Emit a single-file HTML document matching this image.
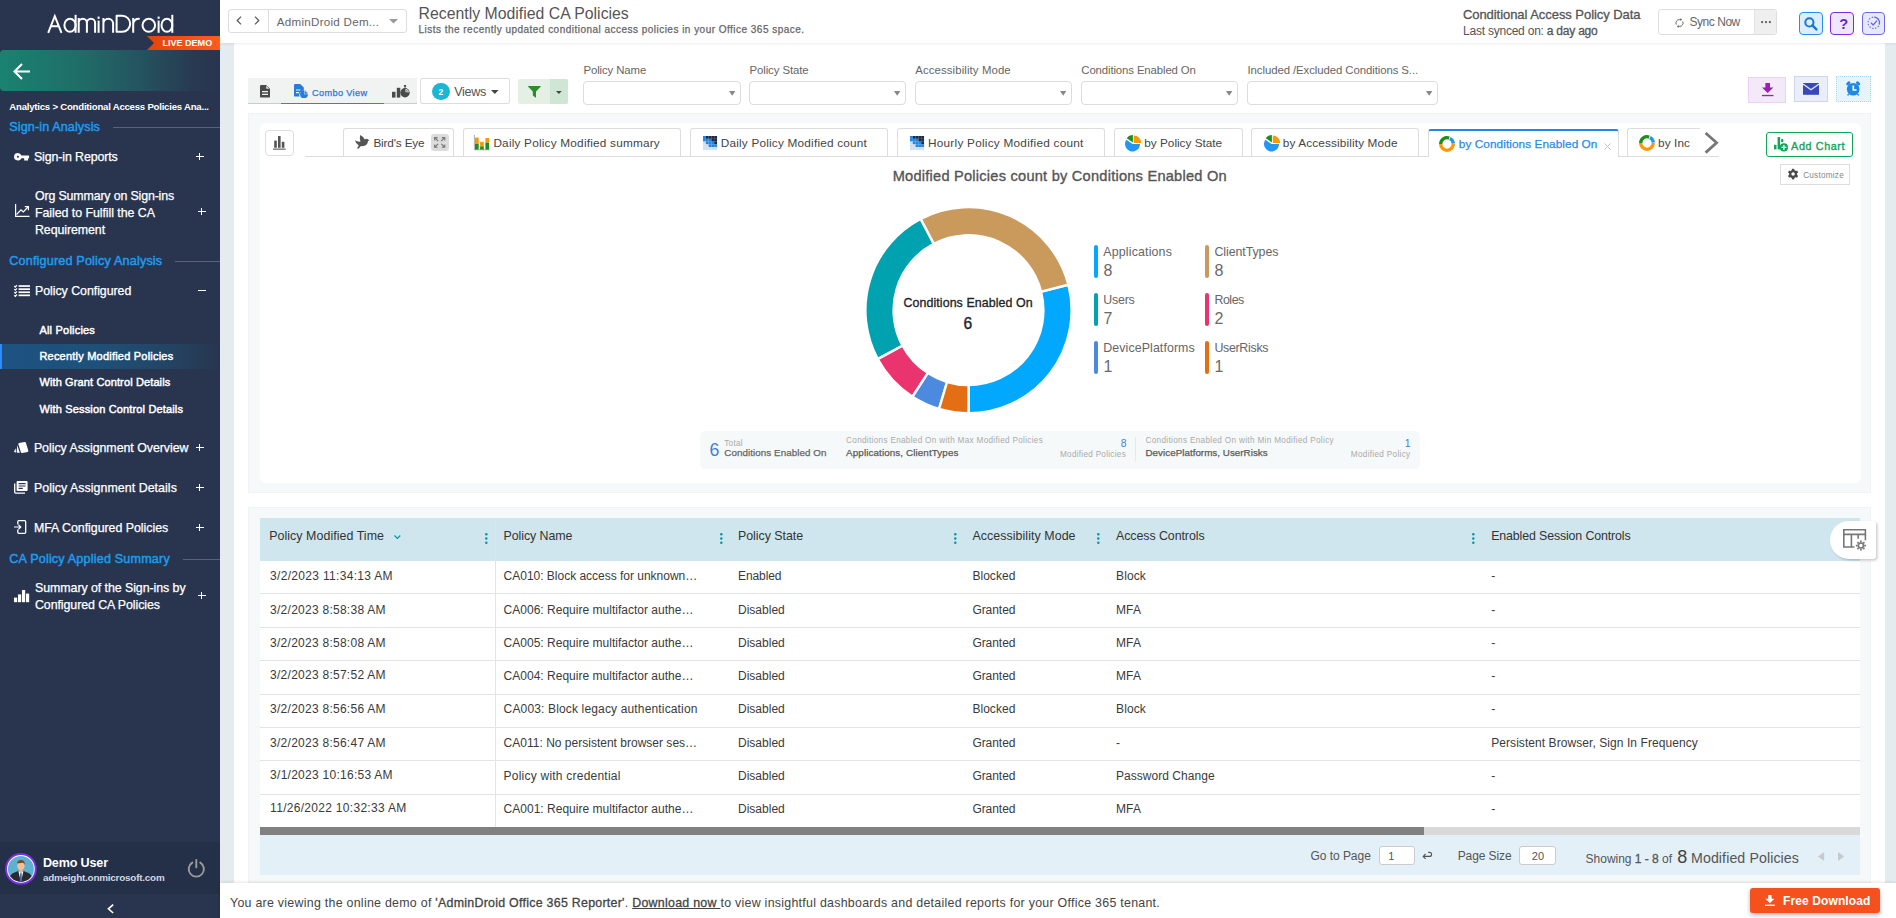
<!DOCTYPE html>
<html><head><meta charset="utf-8"><title>AdminDroid</title><style>
html,body{margin:0;padding:0}
body{width:1896px;height:918px;position:relative;overflow:hidden;background:#fff;font-family:"Liberation Sans", sans-serif;}
div{box-sizing:border-box}
.t{position:absolute;white-space:nowrap;line-height:1;}
svg{position:absolute;overflow:visible}
</style></head><body>
<div style="position:absolute;left:220px;top:43px;width:14px;height:875px;background:#e4ecf0"></div>
<div style="position:absolute;left:1885px;top:43px;width:11px;height:875px;background:#e4ecf0"></div>
<div style="position:absolute;left:220px;top:0px;width:1676px;height:43px;background:#fff;box-shadow:0 1px 2.5px rgba(40,70,90,.10)"></div>
<div style="position:absolute;left:0px;top:0px;width:220px;height:918px;background:#29354f"></div>
<div style="position:absolute;left:0;top:0;width:220px;height:918px">
<div style="position:absolute;left:0px;top:50px;width:220px;height:41px;background:linear-gradient(90deg,#1a8270 0%,#1f6e68 35%,#245560 62%,#283a52 88%,#29354f 100%);border-radius:4px 0 0 4px"></div>
<svg style="left:13px;top:63px" width="18" height="17" viewBox="0 0 18 17"><path d="M9 1 L1.5 8.5 L9 16 M1.5 8.5 H17" fill="none" stroke="#fff" stroke-width="2.1" stroke-linecap="butt" stroke-linejoin="miter"/></svg>
<svg style="left:147px;top:36px" width="73" height="14" viewBox="0 0 73 14"><defs><linearGradient id="lg1" x1="0" x2="1"><stop offset="0" stop-color="#e5430d"/><stop offset="1" stop-color="#ff5c1d"/></linearGradient></defs><path d="M0 0 H73 V14 H0 L7 7 Z" fill="url(#lg1)"/></svg>
<svg style="left:0;top:0" width="220" height="50" viewBox="0 0 220 50"><g fill="none" stroke="#fff" stroke-width="2" stroke-linecap="butt" stroke-linejoin="round">
<path d="M48.2 32.8 L54.8 16.2 L61.5 32.8 M50.9 26.2 H58.7" stroke-linejoin="miter"/>
<ellipse cx="70" cy="25.3" rx="5.6" ry="6.5"/><path d="M75.6 14.8 V32.8"/>
<path d="M78.7 32.8 V17.9 M78.7 23 a4.1 4.3 0 0 1 8.2 0 V32.8 M86.9 23 a4.1 4.3 0 0 1 8.2 0 V32.8"/>
<path d="M98.6 20.6 V32.8"/>
<path d="M103.4 32.8 V17.9 M103.4 23.6 a4.85 4.9 0 0 1 9.7 0 V32.8"/>
<path d="M116.6 15.8 V31.8 H122.2 a8 8 0 0 0 0 -16 Z"/>
<path d="M133.2 32.8 V17.9 M133.2 24 a5.3 5.3 0 0 1 6.5 -5.1"/>
<ellipse cx="148.8" cy="25.3" rx="6.3" ry="6.5"/>
<path d="M158.6 20.6 V32.8"/>
<ellipse cx="166.9" cy="25.3" rx="5.4" ry="6.5"/><path d="M172.3 14.8 V32.8"/>
</g><g fill="#fff"><rect x="97.6" y="16.6" width="2" height="2.2"/><rect x="157.6" y="16.6" width="2" height="2.2"/></g></svg>
<div style="position:absolute;left:113px;top:127px;width:107px;height:1px;background:#59627a"></div>
<div style="position:absolute;left:175px;top:261px;width:45px;height:1px;background:#59627a"></div>
<div style="position:absolute;left:183px;top:559px;width:37px;height:1px;background:#59627a"></div>
<div style="position:absolute;left:0px;top:343.5px;width:220px;height:25px;background:linear-gradient(90deg,#1d5382 0%,#1e5079 45%,#234565 75%,#29354f 100%)"></div>
<div style="position:absolute;left:0px;top:343.5px;width:2px;height:25px;background:#2a8bff"></div>
<div style="position:absolute;left:196px;top:156px;width:8px;height:1px;background:#fff"></div>
<div style="position:absolute;left:199.3px;top:153px;width:1.2px;height:7px;background:#fff"></div>
<div style="position:absolute;left:198px;top:211px;width:8px;height:1px;background:#fff"></div>
<div style="position:absolute;left:200.9px;top:208px;width:1.2px;height:7px;background:#fff"></div>
<div style="position:absolute;left:196px;top:447px;width:8px;height:1px;background:#fff"></div>
<div style="position:absolute;left:199.3px;top:444px;width:1.2px;height:7px;background:#fff"></div>
<div style="position:absolute;left:196px;top:487px;width:8px;height:1px;background:#fff"></div>
<div style="position:absolute;left:199.3px;top:484px;width:1.2px;height:7px;background:#fff"></div>
<div style="position:absolute;left:196px;top:527px;width:8px;height:1px;background:#fff"></div>
<div style="position:absolute;left:199.3px;top:524px;width:1.2px;height:7px;background:#fff"></div>
<div style="position:absolute;left:198px;top:595px;width:8px;height:1px;background:#fff"></div>
<div style="position:absolute;left:200.9px;top:592px;width:1.2px;height:7px;background:#fff"></div>
<div style="position:absolute;left:198px;top:290px;width:7.5px;height:1px;background:#fff"></div>
<svg style="left:13.9px;top:152.6px" width="15.2" height="7.5" viewBox="0 0 15.2 7.5"><path fill="#fff" fill-rule="evenodd" d="M3.85 0 a3.85 3.75 0 1 0 3.6 5.2 H10.2 V7.4 H14.1 V5.2 H15.1 V2.5 H7.45 A3.85 3.75 0 0 0 3.85 0 Z M3.9 2.7 a1.05 1.05 0 1 1 0 2.1 a1.05 1.05 0 0 1 0 -2.1 Z"/></svg>
<svg style="left:14.8px;top:204px" width="15" height="13" viewBox="0 0 15 13"><path d="M0.6 0 V12.4 H14.5" fill="none" stroke="#fff" stroke-width="1.2"/><path d="M1.5 10.5 L6 5.8 L8.3 8 L13 3" fill="none" stroke="#fff" stroke-width="1.2"/><path d="M9.8 2.6 H13.4 V6.2" fill="none" stroke="#fff" stroke-width="1.2"/></svg>
<svg style="left:13.9px;top:285px" width="16" height="11.5" viewBox="0 0 16 11.5"><g fill="#fff"><rect x="4.6" y="0.2" width="11.4" height="1.7"/><rect x="4.6" y="3.3" width="11.4" height="1.7"/><rect x="4.6" y="6.4" width="11.4" height="1.7"/><rect x="4.6" y="9.5" width="11.4" height="1.7"/></g><path d="M0.3 1 l1 1 l1.6 -1.8 M0.3 4.1 l1 1 l1.6 -1.8 M0.3 7.2 l1 1 l1.6 -1.8 M0.3 10.3 l1 1 l1.6 -1.8" fill="none" stroke="#fff" stroke-width="1.25"/></svg>
<svg style="left:13.9px;top:442px" width="14.5" height="11" viewBox="0 0 14.5 11"><path fill="#fff" d="M5 1 L10.6 0 Q11.6 -.1 11.9 .8 L14.3 8.6 Q14.5 9.6 13.6 9.9 L8.2 11 Q7.2 11.1 6.9 10.2 L4.4 2.3 Q4.2 1.3 5 1 Z"/><path fill="#fff" d="M3.2 3.2 L5.8 10.8 L3.5 10.8 Q2.6 10.7 2.7 9.8 Z"/><path fill="#fff" d="M1.6 6.3 L2 10.6 L0.6 10.3 Q0 10 .2 9.3 Z"/></svg>
<svg style="left:13.9px;top:481.2px" width="13.6" height="12.8" viewBox="0 0 13.6 12.8"><path fill="#fff" fill-rule="evenodd" d="M3.6 0 H12.6 Q13.6 0 13.6 1 V9 Q13.6 10 12.6 10 H3.6 Q2.6 10 2.6 9 V1 Q2.6 0 3.6 0 Z M4.6 2 V3.2 H11.6 V2 Z M4.6 4.4 V5.6 H11.6 V4.4 Z M4.6 6.8 V8 H8.8 V6.8 Z"/><path fill="none" stroke="#fff" stroke-width="1.3" d="M0.7 2.6 V11.1 Q0.7 12.1 1.7 12.1 H11"/></svg>
<svg style="left:13.9px;top:520.1px" width="12.4" height="14" viewBox="0 0 12.4 14"><path fill="none" stroke="#fff" stroke-width="1.3" d="M3.8 4.4 V1.7 Q3.8 .7 4.8 .7 H10.7 Q11.7 .7 11.7 1.7 V12.3 Q11.7 13.3 10.7 13.3 H4.8 Q3.8 13.3 3.8 12.3 V9.6"/><path fill="none" stroke="#fff" stroke-width="1.2" d="M0 7 H6.6 M4.4 4.6 L6.8 7 L4.4 9.4"/></svg>
<svg style="left:13.9px;top:589.6px" width="15.2" height="12.2" viewBox="0 0 15.2 12.2"><g fill="#fff"><rect x="0" y="7.6" width="3.2" height="4.6"/><rect x="4" y="4.4" width="3.2" height="7.8"/><rect x="8" y="0" width="3.2" height="12.2"/><rect x="12" y="3.6" width="3.2" height="8.6"/></g></svg>
<div style="position:absolute;left:0px;top:842px;width:220px;height:52px;background:#242f48"></div>
<svg style="left:5.2px;top:853px" width="31.8" height="31.8" viewBox="0 0 31.8 31.8"><defs><clipPath id="av"><circle cx="15.9" cy="15.9" r="13"/></clipPath></defs>
<circle cx="15.9" cy="15.9" r="14.9" fill="#fff" stroke="#7a2fe3" stroke-width="2"/><circle cx="15.9" cy="15.9" r="13" fill="#5fb1d2"/>
<g clip-path="url(#av)"><path d="M3.6 30 Q4 20.6 9.6 19.4 L13.2 18 H18.6 L22.2 19.4 Q27.8 20.6 28.2 30 Z" fill="#2b2b2e"/><path d="M13.4 18.2 L15.9 29 L18.4 18.2 Z" fill="#fff"/><path d="M15.2 19.6 H16.6 L17 27.5 L15.9 29 L14.8 27.5 Z" fill="#4a68b4"/>
<rect x="14.2" y="15" width="3.4" height="3.6" fill="#e8b48a"/><ellipse cx="15.9" cy="12.4" rx="3.7" ry="4.4" fill="#f3c08f"/><path d="M12 12 Q11.7 7 15.9 7 Q20.1 7 19.8 12 Q19.3 10 17.6 9.8 Q15 10.6 12.7 10.1 Q12.2 11 12 12 Z" fill="#7a4a25"/></g></svg>
<svg style="left:187.4px;top:858.8px" width="18.6" height="17.6" viewBox="0 0 18.6 17.6"><path d="M5.3 3.6 A7.6 7.6 0 1 0 13.3 3.6" fill="none" stroke="#9b9b9b" stroke-width="1.9" stroke-linecap="round"/><path d="M9.3 1 V8.4" stroke="#9b9b9b" stroke-width="1.9" stroke-linecap="round"/></svg>
<svg style="left:106.7px;top:904.2px" width="7" height="9.6" viewBox="0 0 7 9.6"><path d="M6.2 .6 L1.4 4.8 L6.2 9" fill="none" stroke="#fff" stroke-width="1.6"/></svg>
</div>
<div style="position:absolute;left:228.2px;top:9.2px;width:178.8px;height:23.6px;border:1px solid #ddd;border-radius:3px;background:#fff"></div>
<div style="position:absolute;left:267.5px;top:10px;width:1px;height:23px;background:#ddd"></div>
<svg style="left:235.5px;top:15.5px" width="6" height="9" viewBox="0 0 6 9"><path d="M5 .7 L1.2 4.5 L5 8.3" fill="none" stroke="#555" stroke-width="1.2"/></svg>
<svg style="left:254px;top:15.5px" width="6" height="9" viewBox="0 0 6 9"><path d="M1 .7 L4.8 4.5 L1 8.3" fill="none" stroke="#555" stroke-width="1.2"/></svg>
<svg style="left:388.5px;top:19px" width="9" height="5" viewBox="0 0 9 5"><path d="M0 0 H9 L4.5 4.6 Z" fill="#999"/></svg>
<div style="position:absolute;left:1658.2px;top:9.4px;width:118.8px;height:25.4px;border:1px solid #ddd;border-radius:3px;background:#fff"></div>
<div style="position:absolute;left:1753.5px;top:10.4px;width:22.5px;height:23.4px;background:#efefef;border-left:1px solid #e2e2e2;border-radius:0 3px 3px 0"></div>
<svg style="left:1674.6px;top:17.6px" width="9" height="10" viewBox="0 0 9 10"><g fill="none" stroke="#666" stroke-width="1"><path d="M1.3 6.6 A3.4 3.4 0 0 1 4.5 1.6 H6.2"/><path d="M7.7 3.4 A3.4 3.4 0 0 1 4.5 8.4 H2.8"/></g><path d="M5.4 0 L7 1.6 L5.4 3.2 Z M3.6 6.8 L2 8.4 L3.6 10 Z" fill="#666"/></svg>
<svg style="left:1760.5px;top:20.6px" width="10" height="2.2" viewBox="0 0 10 2.2"><g fill="#555"><circle cx="1.1" cy="1.1" r="1.1"/><circle cx="5" cy="1.1" r="1.1"/><circle cx="8.9" cy="1.1" r="1.1"/></g></svg>
<div style="position:absolute;left:1799px;top:12.2px;width:24.2px;height:22.6px;border:1.5px solid #2a8de8;border-radius:4px;background:#dbeefb"></div>
<svg style="left:1804.4px;top:16.6px" width="13.5" height="13.5" viewBox="0 0 13.5 13.5"><circle cx="5.4" cy="5.4" r="4.1" fill="none" stroke="#1976d2" stroke-width="2"/><path d="M8.4 8.4 L12.4 12.4" stroke="#1976d2" stroke-width="2.4" stroke-linecap="round"/></svg>
<div style="position:absolute;left:1830px;top:12.2px;width:24px;height:22.6px;border:1.5px solid #7a2be0;border-radius:4px;background:#efe6fb"></div>
<div style="position:absolute;left:1862.1px;top:12.2px;width:22.6px;height:22.6px;border:1.5px solid #6f68e6;border-radius:4px;background:#e6e8fb"></div>
<svg style="left:1866.6px;top:16.4px" width="13.6" height="13.6" viewBox="0 0 13.6 13.6"><path d="M7.4 1.1 A5.7 5.7 0 0 1 12.3 8.6" fill="none" stroke="#6563e6" stroke-width="1.1"/><circle cx="6.8" cy="6.8" r="5.7" fill="none" stroke="#6563e6" stroke-width="1.1" stroke-dasharray="1.4 1.6"/><path d="M4 6.8 L6.2 9 L10 4.6" fill="none" stroke="#6563e6" stroke-width="1.2"/></svg>
<div style="position:absolute;left:248px;top:78px;width:169px;height:25.7px;background:#f1f2f2;border-bottom:1px solid #ccc"></div>
<div style="position:absolute;left:280.8px;top:102.6px;width:103.2px;height:1.6px;background:#2186e8"></div>
<svg style="left:260px;top:85.3px" width="10" height="12.6" viewBox="0 0 10 12.6"><path fill="#4a4a4a" fill-rule="evenodd" d="M1.2 0 H6.2 L10 3.8 V11.4 Q10 12.6 8.8 12.6 H1.2 Q0 12.6 0 11.4 V1.2 Q0 0 1.2 0 Z M2 5.9 V7.2 H8 V5.9 Z M2 8.7 V10 H8 V8.7 Z"/><path d="M6.2 .6 V3.8 H9.4 Z" fill="#d6dde2"/></svg>
<svg style="left:293.7px;top:84.3px" width="14" height="14.2" viewBox="0 0 14 14.2"><path fill="#2a7bdc" fill-rule="evenodd" d="M1.2 0 H6.2 L9.8 3.6 V6.4 A4.6 4.6 0 0 0 5.6 12.6 H1.2 Q0 12.6 0 11.4 V1.2 Q0 0 1.2 0 Z M2 5.4 V6.6 H6.4 V5.4 Z M2 8 V9.2 H5 V8 Z"/><circle cx="10" cy="10.2" r="3.9" fill="#2a7bdc"/><path d="M10 10.2 V6.3 A3.9 3.9 0 0 1 13.9 10.2 Z" fill="#fff" opacity=".85"/><path d="M10.5 9.7 V6.9 A3.3 3.3 0 0 1 13.3 9.7 Z" fill="#2a7bdc"/></svg>
<svg style="left:392.1px;top:85.2px" width="17.8" height="12.6" viewBox="0 0 17.8 12.6"><g fill="#4a4a4a"><rect x="0" y="6.8" width="3.5" height="5.8"/><rect x="4.8" y="2.8" width="3.5" height="9.8"/><circle cx="13" cy="7.8" r="4.7"/><rect x="11.9" y="0" width="2.2" height="1.8"/><rect x="12.5" y="1.5" width="1" height="2"/></g><path d="M13.5 7.3 V3.9 A3.5 3.5 0 0 1 16.9 7.3 Z" fill="#f1f2f2"/><path d="M14.3 6.5 V5 A1.8 1.8 0 0 1 15.8 6.5 Z" fill="#4a4a4a"/></svg>
<div style="position:absolute;left:420.4px;top:78.4px;width:89.2px;height:25.3px;border:1px solid #ddd;border-radius:2px;background:#fff"></div>
<div style="position:absolute;left:431.9px;top:82.6px;width:17.8px;height:17.2px;border-radius:50%;background:#1bb5d6"></div>
<svg style="left:491px;top:90.4px" width="7.6" height="4" viewBox="0 0 7.6 4"><path d="M0 0 H7.6 L3.8 4 Z" fill="#444"/></svg>
<div style="position:absolute;left:518px;top:79px;width:50px;height:24.7px;background:#e4f0e4;border-radius:2px"></div>
<div style="position:absolute;left:550.4px;top:79px;width:17.6px;height:24.7px;background:#d0e6d5;border-radius:0 2px 2px 0"></div>
<svg style="left:528.2px;top:86.2px" width="12.8" height="11.6" viewBox="0 0 12.8 11.6"><path d="M.3 0 H12.5 Q13 .3 12.6 .8 L8 5.6 V11.2 Q7.8 11.7 7.3 11.4 L5 9.6 Q4.8 9.4 4.8 9.1 V5.6 L.2 .8 Q-.2 .3 .3 0 Z" fill="#2c8c2c"/></svg>
<svg style="left:556.1px;top:91.3px" width="5.8" height="3" viewBox="0 0 5.8 3"><path d="M0 0 H5.8 L2.9 3 Z" fill="#444"/></svg>
<div style="position:absolute;left:583.2px;top:81.2px;width:157.4px;height:23.8px;border:1px solid #dcdcdc;border-radius:4px;background:#fff"></div>
<svg style="left:729.0px;top:90.5px" width="6.4" height="4.8" viewBox="0 0 6.4 4.8"><path d="M0 0 H6.4 L3.2 4.8 Z" fill="#888"/></svg>
<div style="position:absolute;left:749.2px;top:81.2px;width:156.6px;height:23.8px;border:1px solid #dcdcdc;border-radius:4px;background:#fff"></div>
<svg style="left:894.2px;top:90.5px" width="6.4" height="4.8" viewBox="0 0 6.4 4.8"><path d="M0 0 H6.4 L3.2 4.8 Z" fill="#888"/></svg>
<div style="position:absolute;left:915px;top:81.2px;width:156.6px;height:23.8px;border:1px solid #dcdcdc;border-radius:4px;background:#fff"></div>
<svg style="left:1060.0px;top:90.5px" width="6.4" height="4.8" viewBox="0 0 6.4 4.8"><path d="M0 0 H6.4 L3.2 4.8 Z" fill="#888"/></svg>
<div style="position:absolute;left:1081px;top:81.2px;width:156.5px;height:23.8px;border:1px solid #dcdcdc;border-radius:4px;background:#fff"></div>
<svg style="left:1225.9px;top:90.5px" width="6.4" height="4.8" viewBox="0 0 6.4 4.8"><path d="M0 0 H6.4 L3.2 4.8 Z" fill="#888"/></svg>
<div style="position:absolute;left:1247.2px;top:81.2px;width:190.4px;height:23.8px;border:1px solid #dcdcdc;border-radius:4px;background:#fff"></div>
<svg style="left:1426.0000000000002px;top:90.5px" width="6.4" height="4.8" viewBox="0 0 6.4 4.8"><path d="M0 0 H6.4 L3.2 4.8 Z" fill="#888"/></svg>
<div style="position:absolute;left:1748.1px;top:77.2px;width:37.7px;height:25.4px;background:#f2e9f9;border:1px solid #efd0f1"></div>
<svg style="left:1761.8px;top:83.1px" width="11.4" height="13.2" viewBox="0 0 11.4 13.2"><path d="M3.4 0 H8 V4.6 H11.4 L5.7 9.9 L0 4.6 H3.4 Z" fill="#9c1fb0"/><rect x="0" y="11.9" width="11.4" height="1.3" fill="#9c1fb0"/></svg>
<div style="position:absolute;left:1794.3px;top:76.1px;width:33.6px;height:25.7px;background:#eaeef8;border:1.5px solid #d0d5ef"></div>
<svg style="left:1803px;top:83.3px" width="16" height="11.8" viewBox="0 0 16 11.8"><rect width="16" height="11.8" fill="#3848ba"/><path d="M0 .9 L8 6.8 L16 .9" fill="none" stroke="#eaeef8" stroke-width="1.3"/></svg>
<div style="position:absolute;left:1836px;top:76.1px;width:34.9px;height:25.7px;background:#e6f4fb;border:1px dotted #a9daee"></div>
<svg style="left:1846.4px;top:81.4px" width="14.4" height="14.8" viewBox="0 0 14.4 14.8"><g fill="#1e88e5"><circle cx="7.2" cy="8.2" r="6.3"/><ellipse cx="2.3" cy="2.3" rx="2.5" ry="1.5" transform="rotate(-42 2.3 2.3)"/><ellipse cx="12.1" cy="2.3" rx="2.5" ry="1.5" transform="rotate(42 12.1 2.3)"/><path d="M2.4 12.6 L3.6 13.6 L2 14.8 L1 13.9 Z M12 12.6 L10.8 13.6 L12.4 14.8 L13.4 13.9 Z"/></g><path d="M7.3 4.4 V9 H10.6" fill="none" stroke="#fff" stroke-width="1.7"/></svg>
<div style="position:absolute;left:248.3px;top:113px;width:1622.4px;height:379.8px;background:#f6f9f9;border:1px solid #f0f3f3"></div>
<div style="position:absolute;left:259.5px;top:122.5px;width:1601.5px;height:360px;background:#fff;border-radius:6px"></div>
<div style="position:absolute;left:265.4px;top:129.5px;width:28.5px;height:26.1px;border:1px solid #ddd;border-radius:4px;background:#fff"></div>
<svg style="left:273.3px;top:135.7px" width="12.7" height="13.7" viewBox="0 0 12.7 13.7"><g fill="#555"><rect x="1.2" y="4.6" width="2.6" height="7.2"/><rect x="5" y="0" width="2.6" height="11.8"/><rect x="8.8" y="5.8" width="2.6" height="6"/><rect x="0" y="12.6" width="12.7" height="1.1"/></g></svg>
<div style="position:absolute;left:305px;top:155.8px;width:1414px;height:1px;background:#ddd"></div>
<div style="position:absolute;left:342.6px;top:128.4px;width:111.0px;height:27.9px;border:1px solid #ddd;border-bottom:none;border-radius:3px 3px 0 0;background:#fff"></div>
<svg style="left:355px;top:135.1px" width="14.6" height="13.9" viewBox="0 0 14.6 13.9"><path fill="#555" d="M0 5.2 Q2.6 7 5.4 6.6 Q4.2 3.4 5.2 0 Q8.6 1.6 9.8 4.6 Q10.9 3.4 12.3 3.9 L14.5 5.3 L13 6.1 Q12.8 9.6 9.6 10.8 Q7.6 11.4 6 11 L3.4 13.7 L2 13.2 L3.8 10.4 Q.8 8.8 0 5.2 Z"/></svg>
<div style="position:absolute;left:431.1px;top:134.1px;width:17.8px;height:16.6px;background:#dcdcdc;border-radius:3px"></div>
<svg style="left:434.2px;top:137.2px" width="11.4" height="10.8" viewBox="0 0 11.4 10.8"><g fill="none" stroke="#777" stroke-width="1.1"><path d="M0.6 3.4 V.6 H3.6 M.8 .8 L4.2 4"/><path d="M10.8 3.4 V.6 H7.8 M10.6 .8 L7.2 4"/><path d="M0.6 7.4 V10.2 H3.6 M.8 10 L4.2 6.8"/><path d="M10.8 7.4 V10.2 H7.8 M10.6 10 L7.2 6.8"/></g></svg>
<div style="position:absolute;left:462.5px;top:128.4px;width:218.79999999999995px;height:27.9px;border:1px solid #ddd;border-bottom:none;border-radius:3px 3px 0 0;background:#fff"></div>
<svg style="left:474.2px;top:135.1px" width="15.6" height="15.2" viewBox="0 0 15.6 15.2"><path d="M.4 0 V14.8 H15.6" fill="none" stroke="#999" stroke-width=".8"/><rect x="1" y="2.6" width="3.7" height="6.2" fill="#ff9800"/><rect x="1" y="8.8" width="3.7" height="5.8" fill="#1e8e1e"/><rect x="6.1" y="6.8" width="3.7" height="4.6" fill="#ff9800"/><rect x="6.1" y="11.4" width="3.7" height="3.2" fill="#1e8e1e"/><rect x="11.4" y="3" width="3.7" height="4.6" fill="#ff9800"/><rect x="11.4" y="7.6" width="3.7" height="7" fill="#1e8e1e"/></svg>
<div style="position:absolute;left:689.5px;top:128.4px;width:198.79999999999995px;height:27.9px;border:1px solid #ddd;border-bottom:none;border-radius:3px 3px 0 0;background:#fff"></div>
<svg style="left:702.9px;top:135.9px" width="14" height="14" viewBox="0 0 14 14"><rect x="0.0" y="0.0" width="2.85" height="2.85" fill="#1e88e5"/><rect x="2.8" y="0.0" width="2.85" height="2.85" fill="#1b2b45"/><rect x="5.6" y="0.0" width="2.85" height="2.85" fill="#1b2b45"/><rect x="8.4" y="0.0" width="2.85" height="2.85" fill="#1b2b45"/><rect x="11.2" y="0.0" width="2.85" height="2.85" fill="#1b2b45"/><rect x="0.0" y="2.8" width="2.85" height="2.85" fill="#1e88e5"/><rect x="2.8" y="2.8" width="2.85" height="2.85" fill="#1e88e5"/><rect x="5.6" y="2.8" width="2.85" height="2.85" fill="#2a7fd6"/><rect x="8.4" y="2.8" width="2.85" height="2.85" fill="#1b2b45"/><rect x="11.2" y="2.8" width="2.85" height="2.85" fill="#1b2b45"/><rect x="0.0" y="5.6" width="2.85" height="2.85" fill="#cfdfee"/><rect x="2.8" y="5.6" width="2.85" height="2.85" fill="#1e88e5"/><rect x="5.6" y="5.6" width="2.85" height="2.85" fill="#1e88e5"/><rect x="8.4" y="5.6" width="2.85" height="2.85" fill="#1e88e5"/><rect x="11.2" y="5.6" width="2.85" height="2.85" fill="#1b2b45"/><rect x="0.0" y="8.4" width="2.85" height="2.85" fill="#cfdfee"/><rect x="2.8" y="8.4" width="2.85" height="2.85" fill="#cfdfee"/><rect x="5.6" y="8.4" width="2.85" height="2.85" fill="#1e88e5"/><rect x="8.4" y="8.4" width="2.85" height="2.85" fill="#1e88e5"/><rect x="11.2" y="8.4" width="2.85" height="2.85" fill="#1e88e5"/><rect x="0.0" y="11.2" width="2.85" height="2.85" fill="#cfdfee"/><rect x="2.8" y="11.2" width="2.85" height="2.85" fill="#cfdfee"/><rect x="5.6" y="11.2" width="2.85" height="2.85" fill="#cfdfee"/><rect x="8.4" y="11.2" width="2.85" height="2.85" fill="#cfdfee"/><rect x="11.2" y="11.2" width="2.85" height="2.85" fill="#cfdfee"/></svg>
<div style="position:absolute;left:896.5px;top:128.4px;width:208.0px;height:27.9px;border:1px solid #ddd;border-bottom:none;border-radius:3px 3px 0 0;background:#fff"></div>
<svg style="left:910.1px;top:135.9px" width="14" height="14" viewBox="0 0 14 14"><rect x="0.0" y="0.0" width="2.85" height="2.85" fill="#1e88e5"/><rect x="2.8" y="0.0" width="2.85" height="2.85" fill="#1b2b45"/><rect x="5.6" y="0.0" width="2.85" height="2.85" fill="#1b2b45"/><rect x="8.4" y="0.0" width="2.85" height="2.85" fill="#1b2b45"/><rect x="11.2" y="0.0" width="2.85" height="2.85" fill="#1b2b45"/><rect x="0.0" y="2.8" width="2.85" height="2.85" fill="#1e88e5"/><rect x="2.8" y="2.8" width="2.85" height="2.85" fill="#1e88e5"/><rect x="5.6" y="2.8" width="2.85" height="2.85" fill="#2a7fd6"/><rect x="8.4" y="2.8" width="2.85" height="2.85" fill="#1b2b45"/><rect x="11.2" y="2.8" width="2.85" height="2.85" fill="#1b2b45"/><rect x="0.0" y="5.6" width="2.85" height="2.85" fill="#cfdfee"/><rect x="2.8" y="5.6" width="2.85" height="2.85" fill="#1e88e5"/><rect x="5.6" y="5.6" width="2.85" height="2.85" fill="#1e88e5"/><rect x="8.4" y="5.6" width="2.85" height="2.85" fill="#1e88e5"/><rect x="11.2" y="5.6" width="2.85" height="2.85" fill="#1b2b45"/><rect x="0.0" y="8.4" width="2.85" height="2.85" fill="#cfdfee"/><rect x="2.8" y="8.4" width="2.85" height="2.85" fill="#cfdfee"/><rect x="5.6" y="8.4" width="2.85" height="2.85" fill="#1e88e5"/><rect x="8.4" y="8.4" width="2.85" height="2.85" fill="#1e88e5"/><rect x="11.2" y="8.4" width="2.85" height="2.85" fill="#1e88e5"/><rect x="0.0" y="11.2" width="2.85" height="2.85" fill="#cfdfee"/><rect x="2.8" y="11.2" width="2.85" height="2.85" fill="#cfdfee"/><rect x="5.6" y="11.2" width="2.85" height="2.85" fill="#cfdfee"/><rect x="8.4" y="11.2" width="2.85" height="2.85" fill="#cfdfee"/><rect x="11.2" y="11.2" width="2.85" height="2.85" fill="#cfdfee"/></svg>
<div style="position:absolute;left:1113.8px;top:128.4px;width:129.60000000000014px;height:27.9px;border:1px solid #ddd;border-bottom:none;border-radius:3px 3px 0 0;background:#fff"></div>
<svg style="left:1125px;top:134.8px" width="16.4" height="16.6" viewBox="0 0 16.4 16.6"><path d="M7.5 9 L15 9 A7.5 7.5 0 1 1 1.4 4.65 Z" fill="#2196f3"/><path d="M8.8 8 V.5 A7.5 7.5 0 0 1 16.3 8 Z" fill="#ff9800"/><path d="M7.9 7.6 L1.8 3.3 A7.5 7.5 0 0 1 7.9 .1 Z" fill="#1e8e1e"/></svg>
<div style="position:absolute;left:1251.3px;top:128.4px;width:167.9000000000001px;height:27.9px;border:1px solid #ddd;border-bottom:none;border-radius:3px 3px 0 0;background:#fff"></div>
<svg style="left:1264px;top:134.8px" width="16.4" height="16.6" viewBox="0 0 16.4 16.6"><path d="M7.5 9 L15 9 A7.5 7.5 0 1 1 1.4 4.65 Z" fill="#2196f3"/><path d="M8.8 8 V.5 A7.5 7.5 0 0 1 16.3 8 Z" fill="#ff9800"/><path d="M7.9 7.6 L1.8 3.3 A7.5 7.5 0 0 1 7.9 .1 Z" fill="#1e8e1e"/></svg>
<div style="position:absolute;left:1427.8px;top:128.6px;width:190.79999999999995px;height:28.4px;border:1px solid #ddd;border-top:2px solid #2186e8;border-bottom:none;border-radius:3px 3px 0 0;background:#fff"></div>
<svg style="left:1439px;top:135.8px" width="16" height="16" viewBox="0 0 16 16"><g fill="none" stroke-width="3.3"><path d="M1.7 8 A6.3 6.3 0 0 0 14.3 8" stroke="#ff9800"/><path d="M1.7 8 A6.3 6.3 0 0 1 10.15 2.08" stroke="#1e8e1e"/><path d="M10.96 2.44 A6.3 6.3 0 0 1 14.29 7.67" stroke="#2196f3"/></g></svg>
<svg style="left:1603.8px;top:142.6px" width="7" height="7" viewBox="0 0 7 7"><path d="M.4 .4 L6.6 6.6 M6.6 .4 L.4 6.6" stroke="#c4c4c4" stroke-width="1"/></svg>
<div style="position:absolute;left:1627.1px;top:128.4px;width:93px;height:27.9px;border:1px solid #ddd;border-bottom:none;border-right:none;border-radius:3px 0 0 0;background:#fff"></div>
<svg style="left:1639px;top:135.2px" width="16" height="16" viewBox="0 0 16 16"><g fill="none" stroke-width="3.3"><path d="M1.7 8 A6.3 6.3 0 0 0 14.3 8" stroke="#ff9800"/><path d="M1.7 8 A6.3 6.3 0 0 1 10.15 2.08" stroke="#1e8e1e"/><path d="M10.96 2.44 A6.3 6.3 0 0 1 14.29 7.67" stroke="#2196f3"/></g></svg>
<div style="position:absolute;left:1676px;top:130px;width:24px;height:25px;background:linear-gradient(90deg,rgba(255,255,255,0),#fff 70%)"></div>
<div style="position:absolute;left:1700px;top:127px;width:20px;height:28.6px;background:#fff"></div>
<svg style="left:1704px;top:131.8px" width="15" height="21.6" viewBox="0 0 15 21.6"><path d="M1.6 1 L12.6 10.8 L1.6 20.6" fill="none" stroke="#777" stroke-width="2.8"/></svg>
<div style="position:absolute;left:1765.9px;top:132.3px;width:87.1px;height:24.5px;border:1.5px solid #12a558;border-radius:3px;background:#fff"></div>
<svg style="left:1774.1px;top:137.4px" width="14" height="14.6" viewBox="0 0 14 14.6"><g fill="#12a558"><rect x="0" y="7.8" width="2.5" height="4.6"/><rect x="3.6" y="0" width="2.5" height="12.4"/><rect x="7.1" y="2.1" width="2.2" height="3"/><circle cx="9.9" cy="10.4" r="4.1"/></g><path d="M9.9 7.9 V12.9 M7.4 10.4 H12.4" stroke="#fff" stroke-width="1.3"/></svg>
<div style="position:absolute;left:1780px;top:164px;width:69.8px;height:20.6px;border:1px solid #ddd;background:#fff"></div>
<svg style="left:1788.1px;top:169.1px" width="10.2" height="10.2" viewBox="0 0 10.2 10.2"><g fill="#4a4a4a"><rect x="3.9" y="-.2" width="2.4" height="2.6" transform="rotate(0 5.1 5.1)"/><rect x="3.9" y="-.2" width="2.4" height="2.6" transform="rotate(60 5.1 5.1)"/><rect x="3.9" y="-.2" width="2.4" height="2.6" transform="rotate(120 5.1 5.1)"/><rect x="3.9" y="-.2" width="2.4" height="2.6" transform="rotate(180 5.1 5.1)"/><rect x="3.9" y="-.2" width="2.4" height="2.6" transform="rotate(240 5.1 5.1)"/><rect x="3.9" y="-.2" width="2.4" height="2.6" transform="rotate(300 5.1 5.1)"/></g><circle cx="5.1" cy="5.1" r="2.9" fill="none" stroke="#4a4a4a" stroke-width="2.3"/></svg>
<svg style="left:0;top:0" width="1896" height="918" viewBox="0 0 1896 918"><path d="M968.50 413.30 A103.1 103.1 0 0 0 1068.41 284.73 L1041.08 291.70 A74.9 74.9 0 0 1 968.50 385.10 Z" fill="#02a8fd" stroke="#fff" stroke-width="2.4" stroke-linejoin="miter"/><path d="M1068.41 284.73 A103.1 103.1 0 0 0 920.57 218.92 L933.68 243.88 A74.9 74.9 0 0 1 1041.08 291.70 Z" fill="#ca9a5d" stroke="#fff" stroke-width="2.4" stroke-linejoin="miter"/><path d="M920.57 218.92 A103.1 103.1 0 0 0 877.72 359.08 L902.55 345.71 A74.9 74.9 0 0 1 933.68 243.88 Z" fill="#01a2af" stroke="#fff" stroke-width="2.4" stroke-linejoin="miter"/><path d="M877.72 359.08 A103.1 103.1 0 0 0 912.50 396.76 L927.82 373.09 A74.9 74.9 0 0 1 902.55 345.71 Z" fill="#e93470" stroke="#fff" stroke-width="2.4" stroke-linejoin="miter"/><path d="M912.50 396.76 A103.1 103.1 0 0 0 939.05 409.00 L947.10 381.98 A74.9 74.9 0 0 1 927.82 373.09 Z" fill="#4c8ae0" stroke="#fff" stroke-width="2.4" stroke-linejoin="miter"/><path d="M939.05 409.00 A103.1 103.1 0 0 0 968.50 413.30 L968.50 385.10 A74.9 74.9 0 0 1 947.10 381.98 Z" fill="#e46e14" stroke="#fff" stroke-width="2.4" stroke-linejoin="miter"/></svg>
<div style="position:absolute;left:1094.1px;top:245.4px;width:4px;height:32.4px;background:#02a8fd;border-radius:2px"></div>
<div style="position:absolute;left:1205.2px;top:245.4px;width:4px;height:32.4px;background:#ca9a5d;border-radius:2px"></div>
<div style="position:absolute;left:1094.1px;top:293.4px;width:4px;height:32.4px;background:#01a2af;border-radius:2px"></div>
<div style="position:absolute;left:1205.2px;top:293.4px;width:4px;height:32.4px;background:#e93470;border-radius:2px"></div>
<div style="position:absolute;left:1094.1px;top:341.3px;width:4px;height:32.4px;background:#4c8ae0;border-radius:2px"></div>
<div style="position:absolute;left:1205.2px;top:341.3px;width:4px;height:32.4px;background:#e46e14;border-radius:2px"></div>
<div style="position:absolute;left:699.8px;top:431px;width:720px;height:37.6px;background:#f6f9f9;border-radius:5px"></div>
<div style="position:absolute;left:1135px;top:437px;width:1px;height:25px;background:#e6e9e9"></div>
<div style="position:absolute;left:248.3px;top:507.4px;width:1622.4px;height:376px;background:#f6f9f9;border:1px solid #f0f3f3"></div>
<div style="position:absolute;left:260px;top:517.7px;width:1600.3px;height:42.9px;background:#cfe6ee"></div>
<svg style="left:393.7px;top:534.6px" width="6.8" height="4.4" viewBox="0 0 6.8 4.4"><path d="M.5 .5 L3.4 3.4 L6.3 .5" fill="none" stroke="#0097a7" stroke-width="1.2"/></svg>
<svg style="left:484.9px;top:533.2px" width="2.6" height="11" viewBox="0 0 2.6 11"><g fill="#0097a7"><circle cx="1.3" cy="1.3" r="1.25"/><circle cx="1.3" cy="5.5" r="1.25"/><circle cx="1.3" cy="9.7" r="1.25"/></g></svg>
<svg style="left:719.6px;top:533.2px" width="2.6" height="11" viewBox="0 0 2.6 11"><g fill="#0097a7"><circle cx="1.3" cy="1.3" r="1.25"/><circle cx="1.3" cy="5.5" r="1.25"/><circle cx="1.3" cy="9.7" r="1.25"/></g></svg>
<svg style="left:953.9000000000001px;top:533.2px" width="2.6" height="11" viewBox="0 0 2.6 11"><g fill="#0097a7"><circle cx="1.3" cy="1.3" r="1.25"/><circle cx="1.3" cy="5.5" r="1.25"/><circle cx="1.3" cy="9.7" r="1.25"/></g></svg>
<svg style="left:1097.2px;top:533.2px" width="2.6" height="11" viewBox="0 0 2.6 11"><g fill="#0097a7"><circle cx="1.3" cy="1.3" r="1.25"/><circle cx="1.3" cy="5.5" r="1.25"/><circle cx="1.3" cy="9.7" r="1.25"/></g></svg>
<svg style="left:1471.9px;top:533.2px" width="2.6" height="11" viewBox="0 0 2.6 11"><g fill="#0097a7"><circle cx="1.3" cy="1.3" r="1.25"/><circle cx="1.3" cy="5.5" r="1.25"/><circle cx="1.3" cy="9.7" r="1.25"/></g></svg>
<div style="position:absolute;left:260px;top:560.6px;width:1600.3px;height:266.88px;background:#fff"></div>
<div style="position:absolute;left:260px;top:593.46px;width:1600.3px;height:1px;background:#e4e4e4"></div>
<div style="position:absolute;left:260px;top:626.82px;width:1600.3px;height:1px;background:#e4e4e4"></div>
<div style="position:absolute;left:260px;top:660.1800000000001px;width:1600.3px;height:1px;background:#e4e4e4"></div>
<div style="position:absolute;left:260px;top:693.54px;width:1600.3px;height:1px;background:#e4e4e4"></div>
<div style="position:absolute;left:260px;top:726.9000000000001px;width:1600.3px;height:1px;background:#e4e4e4"></div>
<div style="position:absolute;left:260px;top:760.26px;width:1600.3px;height:1px;background:#e4e4e4"></div>
<div style="position:absolute;left:260px;top:793.62px;width:1600.3px;height:1px;background:#e4e4e4"></div>
<div style="position:absolute;left:494.5px;top:517.7px;width:1px;height:309.78px;background:#dfe6e8"></div>
<div style="position:absolute;left:1830.2px;top:520.8px;width:45.4px;height:37.8px;background:#fff;border-radius:19px 3px 3px 19px;box-shadow:1.5px 1.5px 2.5px rgba(0,0,0,.2)"></div>
<svg style="left:1843.4px;top:529.2px" width="24" height="22.6" viewBox="0 0 24 22.6"><g fill="none" stroke="#777" stroke-width="1.6"><path d="M11.4 18 H.8 V.8 H22.4 V11.2"/><path d="M.8 5.4 H22.4 M8.4 5.4 V18 M15.2 5.4 V9.8"/></g><g fill="none" stroke="#777"><circle cx="17.9" cy="16.6" r="2.5" stroke-width="1.5"/><path d="M17.9 11.6 V21.6 M12.9 16.6 H22.9 M14.4 13.1 L21.4 20.1 M21.4 13.1 L14.4 20.1" stroke-width="1.7" stroke-dasharray="1.8 6.4"/></g></svg>
<div style="position:absolute;left:260px;top:827.48px;width:1600.3px;height:8px;background:#d9d9d9"></div>
<div style="position:absolute;left:260px;top:827.48px;width:1163.8px;height:8px;background:#808080"></div>
<div style="position:absolute;left:260px;top:835.48px;width:1600.3px;height:39.8px;background:#e3f0f8"></div>
<div style="position:absolute;left:1379.2px;top:846px;width:36.2px;height:18.6px;background:#fff;border:1px solid #ccc;border-radius:3px"></div>
<svg style="left:1422.2px;top:851.4px" width="10.4" height="8.6" viewBox="0 0 10.4 8.6"><path d="M1.2 5.4 H7.4 Q9.6 5.4 9.6 3.4 Q9.6 1.4 7.4 1.4 H6.2 M3.6 3 L1.2 5.4 L3.6 7.8" fill="none" stroke="#555" stroke-width="1.1"/></svg>
<div style="position:absolute;left:1519.4px;top:846px;width:37.1px;height:18.6px;background:#fff;border:1px solid #ccc;border-radius:3px"></div>
<svg style="left:1817.5px;top:852.2px" width="6.2" height="9" viewBox="0 0 6.2 9"><path d="M6.2 0 V9 L0 4.5 Z" fill="#c6cacd"/></svg>
<svg style="left:1838.4px;top:852.2px" width="6.2" height="9" viewBox="0 0 6.2 9"><path d="M0 0 V9 L6.2 4.5 Z" fill="#c6cacd"/></svg>
<div style="position:absolute;left:220px;top:882.5px;width:1676px;height:36px;background:#fff;box-shadow:0 -1px 3px rgba(0,0,0,.10)"></div>
<div style="position:absolute;left:1750px;top:888.4px;width:130.2px;height:24.4px;background:#f4511e;border-radius:3px;box-shadow:0 2px 4px rgba(0,0,0,.3)"></div>
<svg style="left:1764.6px;top:895.4px" width="9.8" height="11" viewBox="0 0 9.8 11"><path d="M3.2 0 H6.6 V3.8 H9.4 L4.9 8.2 L.4 3.8 H3.2 Z" fill="#fff"/><rect x="0" y="9.6" width="9.8" height="1.4" fill="#fff"/></svg>
<span class="t" style="left:162.40px;top:39.45px;font-size:9.1px;font-weight:700;color:#fff;letter-spacing:-0.026px;">LIVE DEMO</span>
<span class="t" style="left:9.30px;top:101.70px;font-size:9.6px;font-weight:700;color:#fff;letter-spacing:-0.220px;">Analytics &gt; Conditional Access Policies Ana...</span>
<span class="t" style="left:9.30px;top:120.70px;font-size:12.6px;color:#1e9cf0;letter-spacing:0.112px;-webkit-text-stroke:0.45px #1e9cf0;">Sign-in Analysis</span>
<span class="t" style="left:9.30px;top:254.70px;font-size:12.6px;color:#1e9cf0;letter-spacing:0.177px;-webkit-text-stroke:0.45px #1e9cf0;">Configured Policy Analysis</span>
<span class="t" style="left:9.30px;top:552.70px;font-size:12.6px;color:#1e9cf0;letter-spacing:0.180px;-webkit-text-stroke:0.45px #1e9cf0;">CA Policy Applied Summary</span>
<span class="t" style="left:33.90px;top:150.80px;font-size:12.4px;color:#fff;letter-spacing:-0.107px;-webkit-text-stroke:0.25px #fff;">Sign-in Reports</span>
<span class="t" style="left:35.00px;top:189.80px;font-size:12.4px;color:#fff;letter-spacing:-0.154px;-webkit-text-stroke:0.25px #fff;">Org Summary on Sign-ins</span>
<span class="t" style="left:35.00px;top:206.80px;font-size:12.4px;color:#fff;letter-spacing:-0.054px;-webkit-text-stroke:0.25px #fff;">Failed to Fulfill the CA</span>
<span class="t" style="left:35.00px;top:223.80px;font-size:12.4px;color:#fff;letter-spacing:-0.087px;-webkit-text-stroke:0.25px #fff;">Requirement</span>
<span class="t" style="left:35.00px;top:284.80px;font-size:12.4px;color:#fff;letter-spacing:-0.049px;-webkit-text-stroke:0.25px #fff;">Policy Configured</span>
<span class="t" style="left:39.40px;top:324.50px;font-size:11px;color:#fff;letter-spacing:0.209px;-webkit-text-stroke:0.45px #fff;">All Policies</span>
<span class="t" style="left:39.40px;top:350.50px;font-size:11px;color:#fff;letter-spacing:0.216px;-webkit-text-stroke:0.45px #fff;">Recently Modified Policies</span>
<span class="t" style="left:39.40px;top:376.50px;font-size:11px;color:#fff;letter-spacing:0.124px;-webkit-text-stroke:0.45px #fff;">With Grant Control Details</span>
<span class="t" style="left:39.40px;top:403.50px;font-size:11px;color:#fff;letter-spacing:0.154px;-webkit-text-stroke:0.45px #fff;">With Session Control Details</span>
<span class="t" style="left:33.90px;top:441.80px;font-size:12.4px;color:#fff;letter-spacing:-0.040px;-webkit-text-stroke:0.25px #fff;">Policy Assignment Overview</span>
<span class="t" style="left:33.90px;top:481.80px;font-size:12.4px;color:#fff;letter-spacing:0.045px;-webkit-text-stroke:0.25px #fff;">Policy Assignment Details</span>
<span class="t" style="left:33.90px;top:521.80px;font-size:12.4px;color:#fff;letter-spacing:-0.030px;-webkit-text-stroke:0.25px #fff;">MFA Configured Policies</span>
<span class="t" style="left:35.00px;top:581.80px;font-size:12.4px;color:#fff;letter-spacing:-0.062px;-webkit-text-stroke:0.25px #fff;">Summary of the Sign-ins by</span>
<span class="t" style="left:35.00px;top:598.80px;font-size:12.4px;color:#fff;letter-spacing:-0.083px;-webkit-text-stroke:0.25px #fff;">Configured CA Policies</span>
<span class="t" style="left:42.90px;top:856.70px;font-size:12.6px;font-weight:700;color:#fff;letter-spacing:-0.167px;">Demo User</span>
<span class="t" style="left:42.90px;top:872.55px;font-size:9.9px;font-weight:700;color:#d4d9e2;letter-spacing:-0.215px;">admeight.onmicrosoft.com</span>
<span class="t" style="left:276.80px;top:16.20px;font-size:11.6px;color:#666;letter-spacing:0.268px;">AdminDroid Dem...</span>
<span class="t" style="left:418.60px;top:5.60px;font-size:15.8px;color:#555;letter-spacing:0.012px;">Recently Modified CA Policies</span>
<span class="t" style="left:418.50px;top:24.50px;font-size:10px;color:#666;letter-spacing:0.478px;-webkit-text-stroke:0.25px #666;">Lists the recently updated conditional access policies in your Office 365 space.</span>
<span class="t" style="left:1462.90px;top:8.00px;font-size:13px;color:#555;letter-spacing:-0.053px;-webkit-text-stroke:0.3px #555;">Conditional Access Policy Data</span>
<span class="t" style="left:1463.00px;top:25.00px;font-size:12px;color:#555;letter-spacing:-0.224px;">Last synced on: <span style="-webkit-text-stroke:0.3px #555">a day ago</span></span>
<span class="t" style="left:1689.50px;top:16.00px;font-size:12px;color:#666;letter-spacing:-0.466px;">Sync Now</span>
<span class="t" style="left:1343.70px;width:1000px;text-align:center;top:16.70px;font-size:14.6px;font-weight:700;color:#6a1fd0;">?</span>
<span class="t" style="left:312.00px;top:89.40px;font-size:9.2px;color:#2a7bdc;letter-spacing:0.348px;-webkit-text-stroke:0.25px #2a7bdc;">Combo View</span>
<span class="t" style="left:438.60px;top:87.75px;font-size:8.5px;font-weight:700;color:#fff;">2</span>
<span class="t" style="left:454.20px;top:85.70px;font-size:12.6px;color:#555;letter-spacing:-0.335px;">Views</span>
<span class="t" style="left:583.50px;top:65.30px;font-size:11.4px;color:#666;letter-spacing:-0.122px;">Policy Name</span>
<span class="t" style="left:749.50px;top:65.30px;font-size:11.4px;color:#666;letter-spacing:-0.096px;">Policy State</span>
<span class="t" style="left:915.30px;top:65.30px;font-size:11.4px;color:#666;letter-spacing:0.100px;">Accessibility Mode</span>
<span class="t" style="left:1081.30px;top:65.30px;font-size:11.4px;color:#666;letter-spacing:-0.126px;">Conditions Enabled On</span>
<span class="t" style="left:1247.50px;top:65.30px;font-size:11.4px;color:#666;letter-spacing:-0.085px;">Included /Excluded Conditions S...</span>
<span class="t" style="left:373.40px;top:138.10px;font-size:11.8px;color:#444;letter-spacing:-0.165px;">Bird's Eye</span>
<span class="t" style="left:493.40px;top:138.10px;font-size:11.8px;color:#444;letter-spacing:0.206px;">Daily Policy Modified summary</span>
<span class="t" style="left:720.70px;top:138.10px;font-size:11.8px;color:#444;letter-spacing:0.201px;">Daily Policy Modified count</span>
<span class="t" style="left:928.00px;top:138.10px;font-size:11.8px;color:#444;letter-spacing:0.241px;">Hourly Policy Modified count</span>
<span class="t" style="left:1144.30px;top:138.10px;font-size:11.8px;color:#444;letter-spacing:-0.015px;">by Policy State</span>
<span class="t" style="left:1282.80px;top:138.10px;font-size:11.8px;color:#444;letter-spacing:0.127px;">by Accessibility Mode</span>
<span class="t" style="left:1458.80px;top:139.10px;font-size:11.8px;color:#2a8be6;letter-spacing:0.068px;-webkit-text-stroke:0.25px #2a8be6;">by Conditions Enabled On</span>
<span class="t" style="left:1658.10px;top:138.10px;font-size:11.8px;color:#444;letter-spacing:0.086px;">by Inc</span>
<span class="t" style="left:1791.10px;top:140.60px;font-size:10.8px;color:#12a558;letter-spacing:0.608px;-webkit-text-stroke:0.35px #12a558;">Add Chart</span>
<span class="t" style="left:1803.20px;top:172.40px;font-size:8.2px;color:#888;letter-spacing:0.235px;">Customize</span>
<span class="t" style="left:892.70px;top:168.70px;font-size:14.6px;color:#555;letter-spacing:0.236px;-webkit-text-stroke:0.35px #555;">Modified Policies count by Conditions Enabled On</span>
<span class="t" style="left:903.50px;top:296.80px;font-size:12.4px;color:#222;letter-spacing:0.084px;-webkit-text-stroke:0.3px #222;">Conditions Enabled On</span>
<span class="t" style="left:963.40px;top:315.70px;font-size:15.6px;color:#222;-webkit-text-stroke:0.35px #222;">6</span>
<span class="t" style="left:1103.30px;top:245.80px;font-size:12.4px;color:#666;letter-spacing:0.157px;">Applications</span>
<span class="t" style="left:1103.50px;top:262.50px;font-size:16px;color:#6a6a6a;">8</span>
<span class="t" style="left:1214.40px;top:245.80px;font-size:12.4px;color:#666;letter-spacing:-0.068px;">ClientTypes</span>
<span class="t" style="left:1214.60px;top:262.50px;font-size:16px;color:#6a6a6a;">8</span>
<span class="t" style="left:1103.30px;top:293.80px;font-size:12.4px;color:#666;letter-spacing:-0.212px;">Users</span>
<span class="t" style="left:1103.50px;top:310.50px;font-size:16px;color:#6a6a6a;">7</span>
<span class="t" style="left:1214.40px;top:293.80px;font-size:12.4px;color:#666;letter-spacing:-0.438px;">Roles</span>
<span class="t" style="left:1214.60px;top:310.50px;font-size:16px;color:#6a6a6a;">2</span>
<span class="t" style="left:1103.30px;top:341.80px;font-size:12.4px;color:#666;letter-spacing:0.086px;">DevicePlatforms</span>
<span class="t" style="left:1103.50px;top:358.50px;font-size:16px;color:#6a6a6a;">1</span>
<span class="t" style="left:1214.40px;top:341.80px;font-size:12.4px;color:#666;letter-spacing:-0.295px;">UserRisks</span>
<span class="t" style="left:1214.60px;top:358.50px;font-size:16px;color:#6a6a6a;">1</span>
<span class="t" style="left:709.50px;top:442.20px;font-size:17.6px;color:#3f80d8;">6</span>
<span class="t" style="left:724.30px;top:440.40px;font-size:8.2px;color:#aaa;letter-spacing:0.221px;">Total</span>
<span class="t" style="left:724.30px;top:447.60px;font-size:9.8px;color:#666;letter-spacing:0.073px;-webkit-text-stroke:0.25px #666;">Conditions Enabled On</span>
<span class="t" style="left:846.10px;top:437.40px;font-size:8.2px;color:#aaa;letter-spacing:0.302px;">Conditions Enabled On with Max Modified Policies</span>
<span class="t" style="left:846.10px;top:447.60px;font-size:9.8px;color:#5a5a5a;letter-spacing:0.117px;-webkit-text-stroke:0.25px #5a5a5a;">Applications, ClientTypes</span>
<span class="t" style="right:769.60px;top:439.30px;font-size:10.4px;color:#3f80d8;">8</span>
<span class="t" style="left:1060.00px;top:451.40px;font-size:8.2px;color:#aaa;letter-spacing:0.268px;">Modified Policies</span>
<span class="t" style="left:1145.50px;top:437.40px;font-size:8.2px;color:#aaa;letter-spacing:0.318px;">Conditions Enabled On with Min Modified Policy</span>
<span class="t" style="left:1145.50px;top:447.60px;font-size:9.8px;color:#5a5a5a;letter-spacing:0.031px;-webkit-text-stroke:0.25px #5a5a5a;">DevicePlatforms, UserRisks</span>
<span class="t" style="right:485.60px;top:439.30px;font-size:10.4px;color:#3f80d8;">1</span>
<span class="t" style="left:1350.80px;top:451.40px;font-size:8.2px;color:#aaa;letter-spacing:0.309px;">Modified Policy</span>
<span class="t" style="left:269.20px;top:529.80px;font-size:12.4px;color:#333;letter-spacing:0.059px;">Policy Modified Time</span>
<span class="t" style="left:503.60px;top:529.80px;font-size:12.4px;color:#333;letter-spacing:-0.077px;">Policy Name</span>
<span class="t" style="left:738.00px;top:529.80px;font-size:12.4px;color:#333;letter-spacing:-0.028px;">Policy State</span>
<span class="t" style="left:972.40px;top:529.80px;font-size:12.4px;color:#333;letter-spacing:0.071px;">Accessibility Mode</span>
<span class="t" style="left:1116.00px;top:529.80px;font-size:12.4px;color:#333;letter-spacing:-0.062px;">Access Controls</span>
<span class="t" style="left:1491.20px;top:529.80px;font-size:12.4px;color:#333;letter-spacing:-0.137px;">Enabled Session Controls</span>
<span class="t" style="left:270.10px;top:570.00px;font-size:12px;color:#3a3a3a;letter-spacing:0.313px;">3/2/2023 11:34:13 AM</span>
<span class="t" style="left:503.60px;top:570.00px;font-size:12px;color:#3a3a3a;letter-spacing:-0.015px;">CA010: Block access for unknown…</span>
<span class="t" style="left:738.00px;top:570.00px;font-size:12px;color:#3a3a3a;letter-spacing:-0.092px;">Enabled</span>
<span class="t" style="left:972.40px;top:570.00px;font-size:12px;color:#3a3a3a;letter-spacing:0.042px;">Blocked</span>
<span class="t" style="left:1116.00px;top:570.00px;font-size:12px;color:#3a3a3a;letter-spacing:0.131px;">Block</span>
<span class="t" style="left:1491.20px;top:570.00px;font-size:12px;color:#3a3a3a;">-</span>
<span class="t" style="left:270.10px;top:604.00px;font-size:12px;color:#3a3a3a;letter-spacing:0.260px;">3/2/2023 8:58:38 AM</span>
<span class="t" style="left:503.60px;top:604.00px;font-size:12px;color:#3a3a3a;letter-spacing:0.014px;">CA006: Require multifactor authe…</span>
<span class="t" style="left:738.00px;top:604.00px;font-size:12px;color:#3a3a3a;letter-spacing:0.012px;">Disabled</span>
<span class="t" style="left:972.40px;top:604.00px;font-size:12px;color:#3a3a3a;letter-spacing:-0.051px;">Granted</span>
<span class="t" style="left:1116.00px;top:604.00px;font-size:12px;color:#3a3a3a;letter-spacing:0.109px;">MFA</span>
<span class="t" style="left:1491.20px;top:604.00px;font-size:12px;color:#3a3a3a;">-</span>
<span class="t" style="left:270.10px;top:637.00px;font-size:12px;color:#3a3a3a;letter-spacing:0.260px;">3/2/2023 8:58:08 AM</span>
<span class="t" style="left:503.60px;top:637.00px;font-size:12px;color:#3a3a3a;letter-spacing:0.014px;">CA005: Require multifactor authe…</span>
<span class="t" style="left:738.00px;top:637.00px;font-size:12px;color:#3a3a3a;letter-spacing:0.012px;">Disabled</span>
<span class="t" style="left:972.40px;top:637.00px;font-size:12px;color:#3a3a3a;letter-spacing:-0.051px;">Granted</span>
<span class="t" style="left:1116.00px;top:637.00px;font-size:12px;color:#3a3a3a;letter-spacing:0.109px;">MFA</span>
<span class="t" style="left:1491.20px;top:637.00px;font-size:12px;color:#3a3a3a;">-</span>
<span class="t" style="left:270.10px;top:669.00px;font-size:12px;color:#3a3a3a;letter-spacing:0.260px;">3/2/2023 8:57:52 AM</span>
<span class="t" style="left:503.60px;top:670.00px;font-size:12px;color:#3a3a3a;letter-spacing:0.014px;">CA004: Require multifactor authe…</span>
<span class="t" style="left:738.00px;top:670.00px;font-size:12px;color:#3a3a3a;letter-spacing:0.012px;">Disabled</span>
<span class="t" style="left:972.40px;top:670.00px;font-size:12px;color:#3a3a3a;letter-spacing:-0.051px;">Granted</span>
<span class="t" style="left:1116.00px;top:670.00px;font-size:12px;color:#3a3a3a;letter-spacing:0.109px;">MFA</span>
<span class="t" style="left:1491.20px;top:670.00px;font-size:12px;color:#3a3a3a;">-</span>
<span class="t" style="left:270.10px;top:703.00px;font-size:12px;color:#3a3a3a;letter-spacing:0.260px;">3/2/2023 8:56:56 AM</span>
<span class="t" style="left:503.60px;top:703.00px;font-size:12px;color:#3a3a3a;letter-spacing:0.153px;">CA003: Block legacy authentication</span>
<span class="t" style="left:738.00px;top:703.00px;font-size:12px;color:#3a3a3a;letter-spacing:0.012px;">Disabled</span>
<span class="t" style="left:972.40px;top:703.00px;font-size:12px;color:#3a3a3a;letter-spacing:0.042px;">Blocked</span>
<span class="t" style="left:1116.00px;top:703.00px;font-size:12px;color:#3a3a3a;letter-spacing:0.131px;">Block</span>
<span class="t" style="left:1491.20px;top:703.00px;font-size:12px;color:#3a3a3a;">-</span>
<span class="t" style="left:270.10px;top:737.00px;font-size:12px;color:#3a3a3a;letter-spacing:0.260px;">3/2/2023 8:56:47 AM</span>
<span class="t" style="left:503.60px;top:737.00px;font-size:12px;color:#3a3a3a;letter-spacing:0.009px;">CA011: No persistent browser ses…</span>
<span class="t" style="left:738.00px;top:737.00px;font-size:12px;color:#3a3a3a;letter-spacing:0.012px;">Disabled</span>
<span class="t" style="left:972.40px;top:737.00px;font-size:12px;color:#3a3a3a;letter-spacing:-0.051px;">Granted</span>
<span class="t" style="left:1116.00px;top:737.00px;font-size:12px;color:#3a3a3a;">-</span>
<span class="t" style="left:1491.20px;top:737.00px;font-size:12px;color:#3a3a3a;letter-spacing:0.068px;">Persistent Browser, Sign In Frequency</span>
<span class="t" style="left:270.10px;top:769.00px;font-size:12px;color:#3a3a3a;letter-spacing:0.268px;">3/1/2023 10:16:53 AM</span>
<span class="t" style="left:503.60px;top:770.00px;font-size:12px;color:#3a3a3a;letter-spacing:0.224px;">Policy with credential</span>
<span class="t" style="left:738.00px;top:770.00px;font-size:12px;color:#3a3a3a;letter-spacing:0.012px;">Disabled</span>
<span class="t" style="left:972.40px;top:770.00px;font-size:12px;color:#3a3a3a;letter-spacing:-0.051px;">Granted</span>
<span class="t" style="left:1116.00px;top:770.00px;font-size:12px;color:#3a3a3a;letter-spacing:0.036px;">Password Change</span>
<span class="t" style="left:1491.20px;top:770.00px;font-size:12px;color:#3a3a3a;">-</span>
<span class="t" style="left:270.10px;top:802.00px;font-size:12px;color:#3a3a3a;letter-spacing:0.296px;">11/26/2022 10:32:33 AM</span>
<span class="t" style="left:503.60px;top:803.00px;font-size:12px;color:#3a3a3a;letter-spacing:0.014px;">CA001: Require multifactor authe…</span>
<span class="t" style="left:738.00px;top:803.00px;font-size:12px;color:#3a3a3a;letter-spacing:0.012px;">Disabled</span>
<span class="t" style="left:972.40px;top:803.00px;font-size:12px;color:#3a3a3a;letter-spacing:-0.051px;">Granted</span>
<span class="t" style="left:1116.00px;top:803.00px;font-size:12px;color:#3a3a3a;letter-spacing:0.109px;">MFA</span>
<span class="t" style="left:1491.20px;top:803.00px;font-size:12px;color:#3a3a3a;">-</span>
<span class="t" style="left:1310.40px;top:850.00px;font-size:12px;color:#555;letter-spacing:-0.032px;">Go to Page</span>
<span class="t" style="left:1388.30px;top:850.50px;font-size:11px;color:#555;">1</span>
<span class="t" style="left:1457.70px;top:850.00px;font-size:12px;color:#555;letter-spacing:-0.100px;">Page Size</span>
<span class="t" style="left:1531.80px;top:850.50px;font-size:11px;color:#555;letter-spacing:0.025px;">20</span>
<span class="t" style="left:1585.60px;top:853.00px;font-size:12px;color:#555;letter-spacing:-0.021px;">Showing <span style="-webkit-text-stroke:0.3px #555">1 - 8</span> of</span>
<span class="t" style="left:1677.30px;top:848.00px;font-size:18px;color:#444;">8</span>
<span class="t" style="left:1691.00px;top:850.90px;font-size:14.2px;color:#555;letter-spacing:0.090px;">Modified Policies</span>
<span class="t" style="left:230.00px;top:896.80px;font-size:12.4px;color:#444;letter-spacing:0.270px;">You are viewing the online demo of <span style="-webkit-text-stroke:0.3px #444">'AdminDroid Office 365 Reporter'</span>. <span style="-webkit-text-stroke:0.3px #444;text-decoration:underline">Download now </span>to view insightful dashboards and detailed reports for your Office 365 tenant.</span>
<span class="t" style="left:1783.10px;top:895.00px;font-size:12px;font-weight:700;color:#fff;letter-spacing:0.099px;">Free Download</span>
</body></html>
